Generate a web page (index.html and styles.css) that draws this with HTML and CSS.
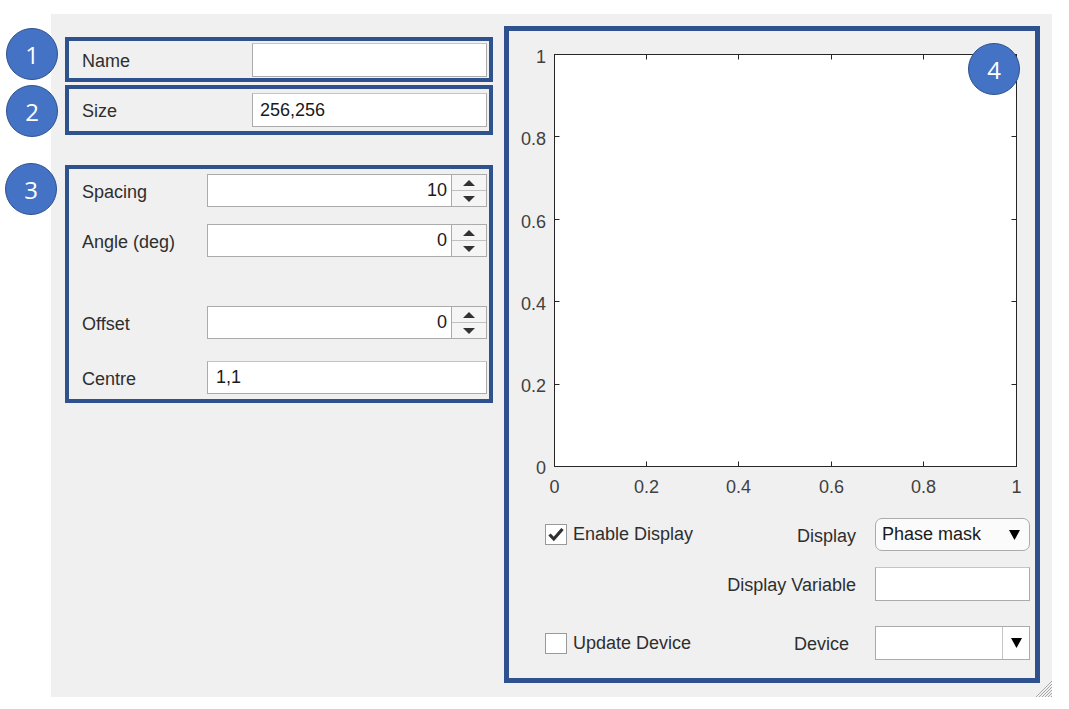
FILE: index.html
```html
<!DOCTYPE html>
<html>
<head>
<meta charset="utf-8">
<link rel="stylesheet" href="styles.css">
</head>
<body>
<div class="panel">
  <div class="left">
    <div class="box box1">
      <span class="lbl">Name</span>
      <div class="field wide"></div>
    </div>
    <div class="box box2">
      <span class="lbl">Size</span>
      <div class="field wide">256,256</div>
    </div>
    <div class="box box3">
      <div class="row r-spacing">
        <span class="lbl lbl3">Spacing</span>
        <div class="spin"><div class="num">10</div><div class="btns"><div class="btn"><span class="up"></span></div><div class="btn"><span class="down"></span></div></div></div>
      </div>
      <div class="row r-angle">
        <span class="lbl lbl3">Angle (deg)</span>
        <div class="spin"><div class="num">0</div><div class="btns"><div class="btn"><span class="up"></span></div><div class="btn"><span class="down"></span></div></div></div>
      </div>
      <div class="row r-offset">
        <span class="lbl lbl3">Offset</span>
        <div class="spin"><div class="num">0</div><div class="btns"><div class="btn"><span class="up"></span></div><div class="btn"><span class="down"></span></div></div></div>
      </div>
      <div class="row r-centre">
        <span class="lbl lbl3">Centre</span>
        <div class="field centre">1,1</div>
      </div>
    </div>
  </div>
  <div class="box box4">
    <svg class="plot" width="526" height="475" viewBox="0 0 526 475">
      <rect x="45.5" y="23.5" width="462" height="412" fill="#ffffff" stroke="#262626" stroke-width="1"/>
      <g stroke="#262626" stroke-width="1">
        <path d="M137.5 435.5V430.5M229.5 435.5V430.5M322.5 435.5V430.5M414.5 435.5V430.5"/>
        <path d="M137.5 23.5V28.5M229.5 23.5V28.5M322.5 23.5V28.5M414.5 23.5V28.5"/>
        <path d="M45.5 353.5H50.5M45.5 270.5H50.5M45.5 188.5H50.5M45.5 105.5H50.5"/>
        <path d="M507.5 353.5H502.5M507.5 270.5H502.5M507.5 188.5H502.5M507.5 105.5H502.5"/>
      </g>
      <g class="tick" text-anchor="end">
        <text x="37" y="443">0</text>
        <text x="37" y="361">0.2</text>
        <text x="37" y="279">0.4</text>
        <text x="37" y="197">0.6</text>
        <text x="37" y="114">0.8</text>
        <text x="37" y="32">1</text>
      </g>
      <g class="tick" text-anchor="middle">
        <text x="45.5" y="462">0</text>
        <text x="137.5" y="462">0.2</text>
        <text x="229.5" y="462">0.4</text>
        <text x="322.5" y="462">0.6</text>
        <text x="414.5" y="462">0.8</text>
        <text x="507.5" y="462">1</text>
      </g>
    </svg>
    <div class="ctrl c1">
      <div class="chk-wrap">
        <span class="chk"><svg width="20" height="19" viewBox="0 0 20 19"><path d="M3.5 9.5L7.8 14L16.5 4" fill="none" stroke="#303030" stroke-width="3.2" stroke-linejoin="miter"/></svg></span>
        <span class="chk-text">Enable Display</span>
      </div>
      <span class="clbl">Display</span>
      <div class="dd rounded"><span>Phase mask</span><svg class="tri" width="11" height="10" viewBox="0 0 11 10"><path d="M0 0H11L5.5 10Z" fill="#000"/></svg></div>
    </div>
    <div class="ctrl c2">
      <div class="chk-wrap"></div>
      <span class="clbl">Display Variable</span>
      <div class="field var"></div>
    </div>
    <div class="ctrl c3">
      <div class="chk-wrap">
        <span class="chk"></span>
        <span class="chk-text">Update Device</span>
      </div>
      <span class="clbl">Device</span>
      <div class="dd square"><span class="ddval"></span><span class="sep"><svg width="11" height="10" viewBox="0 0 11 10"><path d="M0 0H11L5.5 10Z" fill="#000"/></svg></span></div>
    </div>
  </div>
  <svg class="grip" width="18" height="18" viewBox="0 0 18 18">
    <g stroke="#a8a8a8" stroke-width="1">
      <path d="M2 18L18 2M5 18L18 5M8 18L18 8M11 18L18 11M14 18L18 14M17 18L18 17"/>
    </g>
  </svg>
</div>
<div class="badge b1">1</div>
<div class="badge b2">2</div>
<div class="badge b3">3</div>
<div class="badge b4">4</div>
</body>
</html>
```

FILE: styles.css
```css
html, body {
  margin: 0;
  padding: 0;
  background: #ffffff;
}
body {
  position: relative;
  width: 1069px;
  height: 709px;
  font-family: "Liberation Sans", Arial, sans-serif;
  font-size: 18px;
  color: #2e2e2e;
}
.panel {
  position: relative;
  margin: 14px 0 0 51px;
  width: 1001px;
  height: 683px;
  background: #f0f0f0;
  box-sizing: border-box;
  padding: 0 12px 0 14px;
  display: flex;
  gap: 11px;
}
.left {
  width: 428px;
  padding-top: 23px;
  display: flex;
  flex-direction: column;
}
.box {
  border: 4px solid #2f528f;
  box-sizing: border-box;
}
.box1 {
  height: 45px;
  display: flex;
  align-items: flex-start;
  padding: 2px 2px 0 13px;
}
.box1 .lbl {
  margin-top: 8px;
}
.box2 {
  margin-top: 3px;
  height: 50px;
  display: flex;
  align-items: center;
  padding: 0 2px 0 13px;
}
.box2 .lbl {
  padding-top: 2px;
}
.lbl {
  flex: 1;
  line-height: 20px;
}
.field {
  box-sizing: border-box;
  height: 34px;
  background: #ffffff;
  border: 1px solid #ababab;
  border-top-color: #c4c4c4;
  padding-left: 7px;
  line-height: 32px;
  color: #1a1a1a;
}
.field.wide {
  width: 235px;
}
.box3 {
  margin-top: 30px;
  height: 238px;
  padding: 5px 2px 0 13px;
  display: flex;
  flex-direction: column;
}
.row {
  display: flex;
  align-items: center;
  height: 33px;
}
.r-angle { margin-top: 17px; }
.r-offset { margin-top: 49px; }
.r-centre { margin-top: 22px; }
.lbl3 {
  padding-top: 3px;
}
.spin {
  width: 280px;
  height: 33px;
  box-sizing: border-box;
  border: 1px solid #ababab;
  background: #ffffff;
  display: flex;
}
.num {
  flex: 1;
  text-align: right;
  padding-right: 4px;
  line-height: 31px;
  color: #1a1a1a;
}
.btns {
  width: 34px;
  border-left: 1px solid #ababab;
  display: flex;
  flex-direction: column;
  background: #f5f5f5;
}
.btn {
  flex: 1;
  display: flex;
  align-items: center;
  justify-content: center;
}
.btn + .btn {
  border-top: 1px solid #c0c0c0;
}
.up {
  width: 0;
  height: 0;
  border-left: 6px solid transparent;
  border-right: 6px solid transparent;
  border-bottom: 6px solid #333333;
}
.down {
  width: 0;
  height: 0;
  border-left: 6px solid transparent;
  border-right: 6px solid transparent;
  border-top: 6px solid #333333;
}
.field.centre {
  width: 280px;
  height: 33px;
  padding-left: 8px;
  line-height: 31px;
}
.box4 {
  border-width: 5px;
  width: 536px;
  height: 657px;
  margin-top: 12px;
  display: flex;
  flex-direction: column;
}
.plot {
  display: block;
}
.tick {
  font-family: "Liberation Sans", Arial, sans-serif;
  font-size: 18px;
  fill: #404040;
}
.ctrl {
  display: flex;
  align-items: center;
  padding: 0 5px 0 36px;
  height: 33px;
}
.c1 { margin-top: 12px; }
.c2 { margin-top: 16px; }
.c3 { margin-top: 26px; height: 34px; }
.chk-wrap {
  flex: 1;
  display: flex;
  align-items: center;
}
.chk {
  box-sizing: border-box;
  width: 22px;
  height: 21px;
  border: 1px solid #9a9a9a;
  background: #ffffff;
  display: flex;
  align-items: center;
  justify-content: center;
}
.chk-text {
  margin-left: 6px;
  color: #2e2e2e;
}
.clbl {
  margin-right: 19px;
  padding-top: 3px;
  text-align: right;
}
.c3 .clbl { margin-right: 26px; }
.dd {
  box-sizing: border-box;
  width: 155px;
  height: 100%;
  border: 1px solid #ababab;
  display: flex;
  align-items: center;
  color: #1a1a1a;
}
.dd.rounded {
  border-radius: 7px;
  background: #fbfbfb;
  padding: 0 9px 0 6px;
  justify-content: space-between;
}
.tri {
  display: block;
}
.dd.square {
  background: #ffffff;
}
.ddval {
  flex: 1;
}
.sep {
  width: 26px;
  height: 100%;
  border-left: 1px solid #c4c4c4;
  display: flex;
  align-items: center;
  justify-content: center;
}
.sep svg {
  display: block;
}
.field.var {
  width: 155px;
  height: 34px;
}
.grip {
  position: absolute;
  right: 0;
  bottom: 0;
}
.badge {
  position: absolute;
  box-sizing: border-box;
  width: 52px;
  height: 52px;
  border-radius: 50%;
  background: #4472c4;
  border: 1.5px solid #2f528f;
  color: #ffffff;
  font-family: "Open Sans", "Liberation Sans", sans-serif;
  font-size: 24px;
  display: flex;
  align-items: center;
  justify-content: center;
}
.b1 { left: 6px; top: 28px; }
.b2 { left: 6px; top: 85px; }
.b3 { left: 5px; top: 163px; }
.b4 { left: 968px; top: 43px; }
```
